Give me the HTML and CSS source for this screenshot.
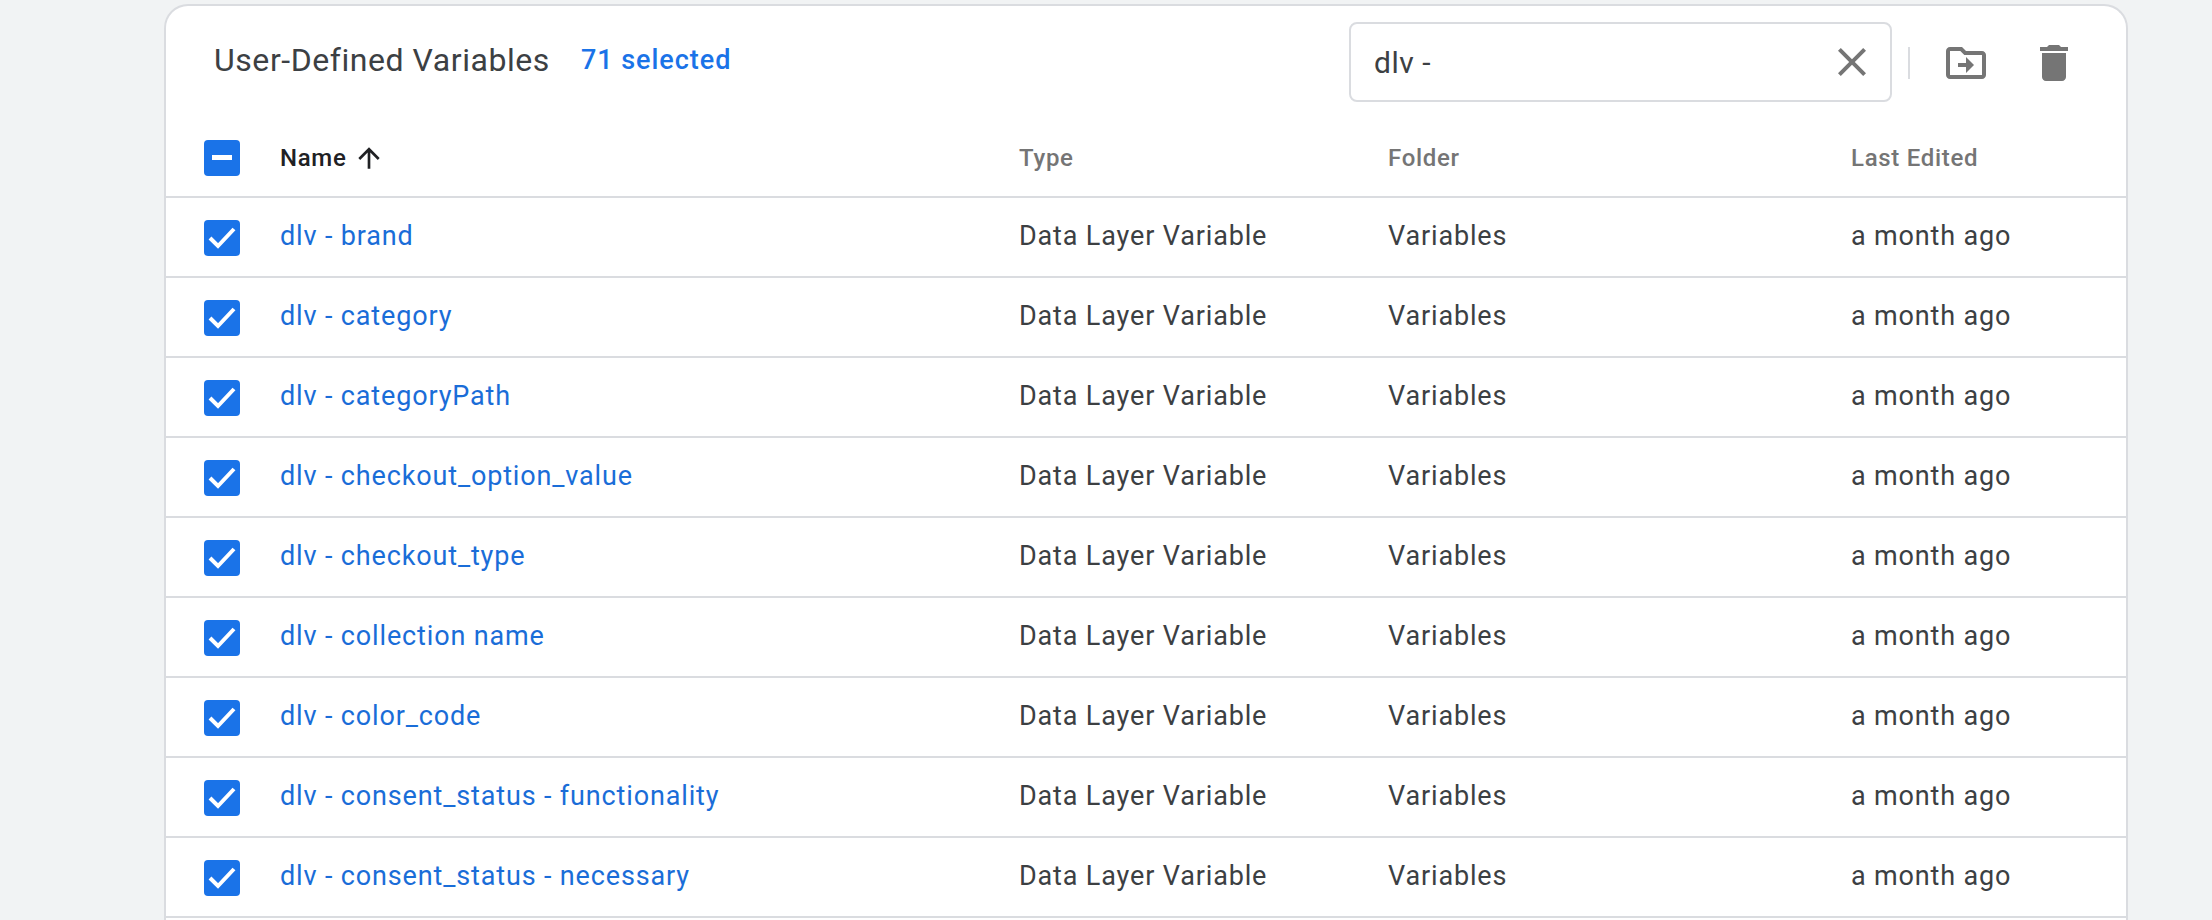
FILE: index.html
```html
<!DOCTYPE html>
<html lang="en">
<head>
<meta charset="utf-8">
<title>User-Defined Variables</title>
<link rel="stylesheet" href="styles.css">
</head>
<body>
<main class="card">
  <header class="toolbar">
    <h1 class="title">User-Defined Variables</h1>
    <span class="selected">71 selected</span>
    <div class="search">
      <span class="search-text">dlv -</span>
      <svg class="icon" viewBox="0 0 24 24"><path d="M19 6.41L17.59 5 12 10.59 6.41 5 5 6.41 10.59 12 5 17.59 6.41 19 12 13.41 17.59 19 19 17.59 13.41 12z"/></svg>
    </div>
    <span class="divider"></span>
    <svg class="icon move" viewBox="0 0 24 24"><path d="M20 6h-8l-2-2H4c-1.1 0-2 .9-2 2v12c0 1.1.9 2 2 2h16c1.1 0 2-.9 2-2V8c0-1.1-.9-2-2-2zm0 12H4V6h5.17l2 2H20v10zm-8-1l4-4-4-4v3H8v2h4v3z"/></svg>
    <svg class="icon trash" viewBox="0 0 24 24"><path d="M6 19c0 1.1.9 2 2 2h8c1.1 0 2-.9 2-2V7H6v12zM19 4h-3.5l-1-1h-5l-1 1H5v2h14V4z"/></svg>
  </header>
  <div class="row head">
    <span class="box"><svg viewBox="0 0 36 36"><rect x="8" y="15" width="20" height="5" fill="#fff"/></svg></span>
    <span class="name-head">Name <svg class="arrow" viewBox="0 0 24 24"><path d="M4 12l1.41 1.41L11 7.83V20h2V7.83l5.58 5.59L20 12l-8-8-8 8z"/></svg></span>
    <span>Type</span>
    <span>Folder</span>
    <span>Last Edited</span>
  </div>
  <div class="row"><span class="box"><svg viewBox="0 0 36 36"><path class="tick" d="M6 18l8 8L30 9"/></svg></span><a class="link">dlv - brand</a><span>Data Layer Variable</span><span>Variables</span><span>a month ago</span></div>
  <div class="row"><span class="box"><svg viewBox="0 0 36 36"><path class="tick" d="M6 18l8 8L30 9"/></svg></span><a class="link">dlv - category</a><span>Data Layer Variable</span><span>Variables</span><span>a month ago</span></div>
  <div class="row"><span class="box"><svg viewBox="0 0 36 36"><path class="tick" d="M6 18l8 8L30 9"/></svg></span><a class="link">dlv - categoryPath</a><span>Data Layer Variable</span><span>Variables</span><span>a month ago</span></div>
  <div class="row"><span class="box"><svg viewBox="0 0 36 36"><path class="tick" d="M6 18l8 8L30 9"/></svg></span><a class="link">dlv - checkout_option_value</a><span>Data Layer Variable</span><span>Variables</span><span>a month ago</span></div>
  <div class="row"><span class="box"><svg viewBox="0 0 36 36"><path class="tick" d="M6 18l8 8L30 9"/></svg></span><a class="link">dlv - checkout_type</a><span>Data Layer Variable</span><span>Variables</span><span>a month ago</span></div>
  <div class="row"><span class="box"><svg viewBox="0 0 36 36"><path class="tick" d="M6 18l8 8L30 9"/></svg></span><a class="link">dlv - collection name</a><span>Data Layer Variable</span><span>Variables</span><span>a month ago</span></div>
  <div class="row"><span class="box"><svg viewBox="0 0 36 36"><path class="tick" d="M6 18l8 8L30 9"/></svg></span><a class="link">dlv - color_code</a><span>Data Layer Variable</span><span>Variables</span><span>a month ago</span></div>
  <div class="row"><span class="box"><svg viewBox="0 0 36 36"><path class="tick" d="M6 18l8 8L30 9"/></svg></span><a class="link">dlv - consent_status - functionality</a><span>Data Layer Variable</span><span>Variables</span><span>a month ago</span></div>
  <div class="row"><span class="box"><svg viewBox="0 0 36 36"><path class="tick" d="M6 18l8 8L30 9"/></svg></span><a class="link">dlv - consent_status - necessary</a><span>Data Layer Variable</span><span>Variables</span><span>a month ago</span></div>
</main>
</body>
</html>
```
FILE: styles.css
```css
html, body { margin: 0; height: 920px; overflow: hidden; }
body {
  background: #f1f3f4;
  font-family: Roboto, "Liberation Sans", sans-serif;
  color: #3c4043;
  padding: 4px 84px 0 164px;
  box-sizing: border-box;
}
.card {
  background: #fff;
  border: 2px solid #dadce0;
  border-bottom: 0;
  border-radius: 24px 24px 0 0;
  height: 920px;
  box-sizing: border-box;
}
.toolbar {
  display: flex;
  align-items: center;
  height: 112px;
  padding: 0 0 0 48px;
}
.title {
  margin: -4px 0 0;
  font-size: 32px;
  font-weight: 400;
  letter-spacing: 0.55px;
  line-height: 40px;
  color: #3c4043;
  width: 367px;
}
.selected {
  font-size: 27px;
  font-weight: 500;
  letter-spacing: 0.95px;
  color: #1a73e8;
  width: 768px;
  margin-top: -4px;
}
.search {
  display: flex;
  align-items: center;
  justify-content: space-between;
  box-sizing: border-box;
  width: 543px;
  height: 80px;
  padding: 0 14px 0 23px;
  border: 2px solid #dadce0;
  border-radius: 8px;
}
.search-text { font-size: 30px; letter-spacing: 0.5px; }
.icon { width: 48px; height: 48px; fill: #757575; flex: none; }
.divider { width: 2px; height: 32px; background: #dadce0; margin: 2px 0 0 16px; }
.move { margin: 2px 0 0 32px; }
.trash { margin: 2px 0 0 40px; }
.row {
  display: grid;
  grid-template-columns: 76px 739px 369px 463px 1fr;
  align-items: center;
  height: 80px;
  box-sizing: border-box;
  padding: 0 0 2px 38px;
  border-bottom: 2px solid #dadce0;
  font-size: 27px;
  letter-spacing: 0.85px;
}
.head {
  font-size: 24px;
  font-weight: 500;
  letter-spacing: 0.7px;
  color: #757575;
  padding: 2px 0 0 38px;
}
.name-head {
  display: flex;
  align-items: center;
  gap: 6px;
  color: #202124;
}
.arrow { width: 32px; height: 32px; fill: #202124; }
.box {
  display: block;
  width: 36px;
  height: 36px;
  margin-top: 4px;
  border-radius: 4px;
  background: #1a73e8;
}
.head .box { margin-top: 0; }
.box svg { display: block; width: 36px; height: 36px; }
.tick { fill: none; stroke: #fff; stroke-width: 4; }
.link { color: #1a6dd8; }
```
